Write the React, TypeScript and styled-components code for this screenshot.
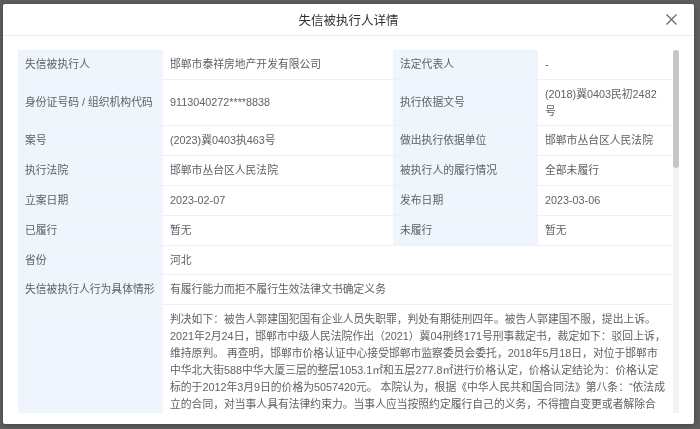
import React from 'react'
import styled, { createGlobalStyle } from 'styled-components'

const GlobalStyle = createGlobalStyle`
  html, body {
    margin: 0;
    padding: 0;
    height: 100%;
  }
  body {
    font-family: "Liberation Sans", "Noto Sans CJK SC", sans-serif;
    background: #ececec;
  }
`

const judgment =
  '判决如下：被告人郭建国犯国有企业人员失职罪，判处有期徒刑四年。被告人郭建国不服，提出上诉。2021年2月24日，邯郸市中级人民法院作出（2021）冀04刑终171号刑事裁定书，裁定如下：驳回上诉，维持原判。 再查明，邯郸市价格认证中心接受邯郸市监察委员会委托，2018年5月18日，对位于邯郸市中华北大街588中华大厦三层的整层1053.1㎡和五层277.8㎡进行价格认定，价格认定结论为：价格认定标的于2012年3月9日的价格为5057420元。 本院认为，根据《中华人民共和国合同法》第八条：“依法成立的合同，对当事人具有法律约束力。当事人应当按照约定履行自己的义务，不得擅自变更或者解除合同。依法成立的合同，受法律保护。”第五十二条规定：“有下列情形之一的，合同无效：（一）一方以欺诈、胁迫的手段订立合同，损害国家利益；（二）恶意串通，损害国家、集体或者第三人利益；（三）以合法形式掩盖非法目的；（四）损害社会公共利益；（五）违反法律、行政法规的强制性规定。”第五十八条规定：“合同无效或者被撤销后，因该合同取得的财产，应当予以返还；不能返还或者没有必要返还的，应当折价补偿。有过错的一方应当赔偿对方因此所受到的损失，双方都有过错的，应当各自承担相应的责任。”本案中，原告与被告于2012年3月9日签订的《房屋买卖合同》，系被告人郭建国在担任原告法定代表人期间，严重不负责任，未经评估即以明显低于市场的价格将原告所有的房产出售给被告，致使国有资产遭受重大损失，该行为已被生效刑事判决所确认。被告邯郸市泰祥房地产开发有限公司在明知交易价格明显低于市场价格的情况下仍与原告签订合同，其行为损害了国家利益，故双方签订的《房屋买卖合同》应属无效。合同无效后，被告应当将因该合同取得的房产返还原告，原告亦应将已收取的购房款返还被告。综上所述，依照《中华人民共和国合同法》第八条、第五十二条、第五十八条之规定，判决如下：一、原告与被告于2012年3月9日签订的《房屋买卖合同》无效；二、被告邯郸市泰祥房地产开发有限公司于本判决生效之日起十日内赔偿原告损失3255620元；三、驳回原告的其他诉讼请求。'

type Row = { label: string; value: string; label2?: string; value2?: string; long?: boolean }

const rows: Row[] = [
  { label: '失信被执行人', value: '邯郸市泰祥房地产开发有限公司', label2: '法定代表人', value2: '-' },
  { label: '身份证号码 / 组织机构代码', value: '9113040272****8838', label2: '执行依据文号', value2: '(2018)冀0403民初2482号' },
  { label: '案号', value: '(2023)冀0403执463号', label2: '做出执行依据单位', value2: '邯郸市丛台区人民法院' },
  { label: '执行法院', value: '邯郸市丛台区人民法院', label2: '被执行人的履行情况', value2: '全部未履行' },
  { label: '立案日期', value: '2023-02-07', label2: '发布日期', value2: '2023-03-06' },
  { label: '已履行', value: '暂无', label2: '未履行', value2: '暂无' },
  { label: '省份', value: '河北' },
  { label: '失信被执行人行为具体情形', value: '有履行能力而拒不履行生效法律文书确定义务' },
  { label: '', value: judgment, long: true },
]

const App = () => {
  return (
    <>
      <GlobalStyle />
      <Overlay>
        <Dialog>
          <Header>
            <span />
            <Title>失信被执行人详情</Title>
            <Close aria-label="关闭">
              <svg width="11" height="11" viewBox="0 0 11 11">
                <path d="M0.5 0.5L10.5 10.5M10.5 0.5L0.5 10.5" stroke="#666" strokeWidth="1.2" fill="none" />
              </svg>
            </Close>
          </Header>
          <Body>
            <Scroller>
              <Table>
                <colgroup>
                  <col style={{ width: 145 }} />
                  <col style={{ width: 230 }} />
                  <col style={{ width: 145 }} />
                  <col />
                </colgroup>
                <tbody>
                  {rows.map((r, i) => (
                    <tr key={i}>
                      <Cell $label>{r.label}</Cell>
                      {r.label2 ? (
                        <>
                          <Cell>{r.value}</Cell>
                          <Cell $label>{r.label2}</Cell>
                          <Cell>{r.value2}</Cell>
                        </>
                      ) : (
                        <Cell colSpan={3} $long={r.long}>
                          {r.value}
                        </Cell>
                      )}
                    </tr>
                  ))}
                </tbody>
              </Table>
            </Scroller>
            <Track>
              <Thumb />
            </Track>
          </Body>
        </Dialog>
      </Overlay>
    </>
  )
}

export default App

const Overlay = styled.div`
  position: fixed;
  inset: 0;
  background: rgba(0, 0, 0, 0.6);
  padding: 4px 6px 5px 3px;
  box-sizing: border-box;
  display: flex;
  align-items: flex-start;
`

const Dialog = styled.div`
  width: 691px;
  height: 420px;
  background: #fff;
  border-radius: 2px;
  box-shadow: 0 1px 6px rgba(0, 0, 0, 0.3);
  display: flex;
  flex-direction: column;
`

const Header = styled.div`
  height: 31px;
  border-bottom: 1px solid #ececec;
  display: grid;
  grid-template-columns: 1fr auto 1fr;
  align-items: center;
`

const Title = styled.div`
  font-family: "Noto Sans CJK SC", sans-serif;
  font-size: 12.5px;
  color: #333;
  line-height: 16px;
`

const Close = styled.button`
  justify-self: end;
  margin-right: 16px;
  width: 13px;
  height: 13px;
  padding: 1px;
  border: none;
  background: none;
  display: flex;
  align-items: center;
  justify-content: center;
  cursor: pointer;
`

const Body = styled.div`
  flex: 1;
  min-height: 0;
  padding: 14px 15px 11px;
  display: flex;
`

const Scroller = styled.div`
  flex: 1;
  min-width: 0;
  overflow-y: auto;
  scrollbar-width: none;

  &::-webkit-scrollbar {
    display: none;
  }
`

const Track = styled.div`
  width: 6px;
  flex: none;
  background: #f3f3f3;
  display: flex;
  flex-direction: column;
`

const Thumb = styled.div`
  height: 118px;
  background: #c6c6c6;
  border-radius: 3px;
`

const Table = styled.table`
  width: 100%;
  table-layout: fixed;
  border-collapse: collapse;
  font-size: 10.8px;
  line-height: 16.8px;
  color: #5f6166;
`

const Cell = styled.td<{ $label?: boolean; $long?: boolean }>`
  padding: ${(p) => (p.$label ? '6px 4px 6px 7px' : '6px 7px')};
  vertical-align: middle;
  line-height: ${(p) => (p.$long ? '17px' : '16.8px')};
  border-bottom: 1px solid #edf0f4;
  background: ${(p) => (p.$label ? '#eff5fc' : '#fff')};
  white-space: ${(p) => (p.$label ? 'nowrap' : 'normal')};
`
